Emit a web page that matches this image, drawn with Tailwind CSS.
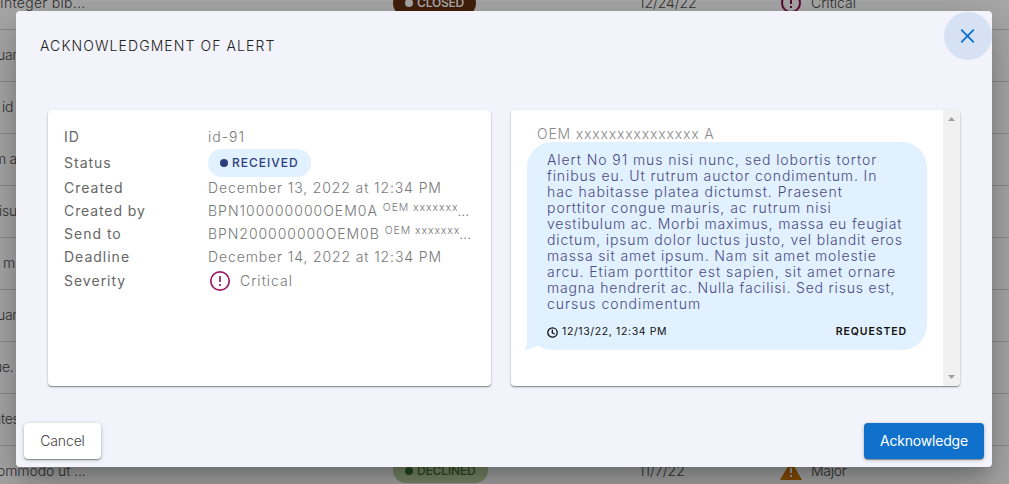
<!DOCTYPE html>
<html lang="en">
<head>
<meta charset="utf-8">
<title>Acknowledgment of alert</title>
<script src="https://cdn.jsdelivr.net/npm/@tailwindcss/browser@4"></script>
</head>
<body class="h-[484px] w-[1009px] overflow-hidden bg-[#a9a9a9] font-['Inter','Liberation_Sans',sans-serif] font-light">
<main class="relative h-[484px] overflow-hidden">
  <!-- Alert table behind the dialog -->
  <div class="-mt-[22px] text-[14px] tracking-[-0.3px] text-[#303030]">
    <div class="flex h-[52px] items-center border-b border-[#8c8c8c] pb-0.5">
      <span class="w-[393px] tracking-[0.28px]">Integer bib...</span>
      <span class="flex h-7 w-[83px] items-center rounded-full bg-[#43200c] pl-3 text-[12px] font-semibold tracking-[-0.2px] text-[#a9a9a9]"><i class="mr-1 size-2 rounded-full bg-[#a9a9a9]"></i>CLOSED</span>
      <span class="ml-[163px] w-[141px] tracking-[-0.1px]">12/24/22</span>
      <svg class="size-6" viewBox="0 0 24 24" fill="none" stroke="#60083c" stroke-width="2"><circle cx="11" cy="12" r="9"/><path d="M11 7v6M11 15v2"/></svg>
      <span class="ml-[7px] tracking-[0px]">Critical</span>
    </div>
    <div class="flex h-[52px] items-center border-b border-[#8c8c8c] pb-0.5"><span class="-ml-[3px]">uam</span></div>
    <div class="flex h-[52px] items-center border-b border-[#8c8c8c] pb-0.5"><span class="ml-[2px]">id</span></div>
    <div class="flex h-[52px] items-center border-b border-[#8c8c8c] pb-0.5"><span class="-ml-[6px]">m a</span></div>
    <div class="flex h-[52px] items-center border-b border-[#8c8c8c] pb-0.5"><span class="-ml-px">isus</span></div>
    <div class="flex h-[52px] items-center border-b border-[#8c8c8c] pb-0.5"><span class="ml-[3px]">m</span></div>
    <div class="flex h-[52px] items-center border-b border-[#8c8c8c] pb-0.5"><span class="-ml-[3px]">uam</span></div>
    <div class="flex h-[52px] items-center border-b border-[#8c8c8c] pb-0.5"><span class="-ml-[6px]">ue.</span></div>
    <div class="flex h-[52px] items-center border-b border-[#8c8c8c] pb-0.5"><span class="-ml-[7px]">ntes</span></div>
    <div class="flex h-[52px] items-center pb-[3px]">
      <span class="w-[393px] -indent-[3px] tracking-[-0.1px]">ommodo ut ...</span>
      <span class="flex h-[25px] w-[95px] items-center rounded-full bg-[#7c8b6a] pl-3 text-[12px] font-medium tracking-[-0.15px] text-[#2b4a20]"><i class="mr-1 size-2 rounded-full bg-[#234a1c]"></i>DECLINED</span>
      <span class="ml-[151px] w-[141px] tracking-[0px]">11/7/22</span>
      <svg class="size-6" viewBox="0 0 24 24"><path d="M0 21 11 2l11 19z" fill="#8a4d00"/><path d="M11 9v5M11 16v2" stroke="#a9a9a9" stroke-width="2"/></svg>
      <span class="ml-[7px]">Major</span>
    </div>
  </div>

  <!-- Dialog -->
  <section class="absolute top-[11px] left-4 flex h-[456px] w-[976px] flex-col rounded bg-[#f2f3fb] shadow-[0_11px_15px_-7px_rgba(0,0,0,0.2),0_24px_38px_3px_rgba(0,0,0,0.14),0_9px_46px_8px_rgba(0,0,0,0.12)]">
    <header class="flex h-[99px] items-start justify-between pt-px">
      <h1 class="mt-6 ml-6 text-[14px] leading-5 tracking-[1.09px] text-[#222]">ACKNOWLEDGMENT OF ALERT</h1>
      <button class="flex size-12 items-center justify-center rounded-full bg-[#d6e2f4]"><svg class="size-6" viewBox="0 0 24 24" fill="none" stroke="#0f71cb" stroke-width="1.9"><path d="m5.2 5.7 12.6 12.6M17.8 5.7 5.2 18.3"/></svg></button>
    </header>

    <div class="flex h-[276px] gap-5 px-8">
      <div class="w-[443px] rounded bg-white px-4 pt-[15px] text-[14px] tracking-[1px] text-[#777] shadow-[0_1px_1px_rgba(0,0,0,0.35),0_1px_3px_rgba(0,0,0,0.18)]">
        <dl class="grid grid-cols-[144px_1fr] grid-rows-[23px_28px_23px_23px_23px_23px_25px] items-center whitespace-nowrap">
          <dt class="font-normal text-[#666]">ID</dt><dd>id-91</dd>
          <dt class="font-normal text-[#666]">Status</dt>
          <dd class="pt-0.5"><span class="flex h-7 w-[103px] items-center rounded-full bg-[#e1f1ff] pl-3 text-[12px] font-medium tracking-[1px] text-[#2c3f7c]"><i class="mr-1 size-2 rounded-full bg-[#2c3f7c]"></i>RECEIVED</span></dd>
          <dt class="font-normal text-[#666]">Created</dt><dd class="tracking-[0.88px]">December 13, 2022 at 12:34 PM</dd>
          <dt class="font-normal tracking-[0.9px] text-[#666]">Created by</dt><dd class="flex"><span>BPN100000000OEM0A</span><span class="ml-[5px] text-[10.5px] leading-[15px] tracking-[0.9px]">OEM xxxxxxx</span><span class="-ml-px tracking-[0px]">...</span></dd>
          <dt class="font-normal text-[#666]">Send to</dt><dd class="flex"><span class="tracking-[0.95px]">BPN200000000OEM0B</span><span class="ml-[5px] text-[10.5px] leading-[15px] tracking-[0.9px]">OEM xxxxxxx</span><span class="-ml-px tracking-[0px]">...</span></dd>
          <dt class="font-normal text-[#666]">Deadline</dt><dd class="tracking-[0.88px]">December 14, 2022 at 12:34 PM</dd>
          <dt class="font-normal text-[#666]">Severity</dt>
          <dd class="flex items-center"><svg class="mr-2 size-6" viewBox="0 0 24 24" fill="none" stroke="#9a1a62" stroke-width="1.7"><circle cx="12" cy="12" r="9.2"/><path d="M12 7v6M12 15v2"/></svg>Critical</dd>
        </dl>
      </div>

      <div class="flex w-[449px] justify-between overflow-hidden rounded bg-white shadow-[0_1px_1px_rgba(0,0,0,0.35),0_1px_3px_rgba(0,0,0,0.18)]">
        <div class="ml-4 w-[400px] pt-4">
          <p class="ml-[10px] h-4 text-[14px] leading-4 tracking-[0.82px] whitespace-nowrap text-[#8a8a8a]">OEM xxxxxxxxxxxxxxx A</p>
          <div class="relative h-52 rounded-[25px] rounded-bl-none bg-[#e1f1ff] px-5 pt-[10px]">
            <svg class="absolute bottom-0 -left-1 h-2 w-8" viewBox="0 0 32 8"><path d="M4 4h28v4H4z" fill="#fff"/><path d="M4 0V3Q4 6.5 0 7.5 8 8.5 14 3 20 8 32 8V0z" fill="#e1f1ff"/></svg>
            <div class="text-[14px] leading-4 whitespace-nowrap text-[#4b4a82]">
              <p class="tracking-[0.92px]">Alert No 91 mus nisi nunc, sed lobortis tortor</p>
              <p class="tracking-[0.89px]">finibus eu. Ut rutrum auctor condimentum. In</p>
              <p class="tracking-[0.97px]">hac habitasse platea dictumst. Praesent</p>
              <p class="tracking-[0.95px]">porttitor congue mauris, ac rutrum nisi</p>
              <p class="tracking-[0.84px]">vestibulum ac. Morbi maximus, massa eu feugiat</p>
              <p class="tracking-[0.85px]">dictum, ipsum dolor luctus justo, vel blandit eros</p>
              <p class="tracking-[0.88px]">massa sit amet ipsum. Nam sit amet molestie</p>
              <p class="tracking-[0.96px]">arcu. Etiam porttitor est sapien, sit amet ornare</p>
              <p class="tracking-[0.82px]">magna hendrerit ac. Nulla facilisi. Sed risus est,</p>
              <p class="tracking-[0.95px]">cursus condimentum</p>
            </div>
            <div class="mt-3 flex h-4 items-center text-[10.5px] font-normal tracking-[0.63px] text-[#111]">
              <svg class="mr-1 size-[11px]" viewBox="0 0 11 11" fill="none" stroke="#111" stroke-width="1.3"><circle cx="5.5" cy="5.5" r="4.7"/><path d="M5.3 2.5v3.2l2.4 1.5"/></svg>
              <span>12/13/22, 12:34 PM</span>
              <span class="ml-auto font-semibold tracking-[0.9px]">REQUESTED</span>
            </div>
          </div>
        </div>
        <div class="flex w-[17px] flex-col items-center justify-between bg-[#f1f1f1] py-[7px]">
          <svg class="h-1 w-[7px]" viewBox="0 0 7 4"><path d="M0 4 3.5 0 7 4z" fill="#a0a0a0"/></svg>
          <svg class="h-1 w-[7px]" viewBox="0 0 7 4"><path d="M0 0h7L3.5 4z" fill="#a0a0a0"/></svg>
        </div>
      </div>
    </div>

    <footer class="mt-auto flex justify-between p-2 text-[14px]">
      <button class="h-9 w-[77px] rounded bg-white pb-0.5 tracking-[-0.15px] text-[#444] shadow-[0_1px_1px_rgba(0,0,0,0.35),0_1px_4px_rgba(0,0,0,0.22)]">Cancel</button>
      <button class="h-9 w-[120px] rounded bg-[#0f71cb] pb-0.5 font-normal tracking-[-0.2px] text-white shadow-[0_1px_1px_rgba(0,0,0,0.35),0_1px_4px_rgba(0,0,0,0.22)]">Acknowledge</button>
    </footer>
  </section>
</main>
</body>
</html>
